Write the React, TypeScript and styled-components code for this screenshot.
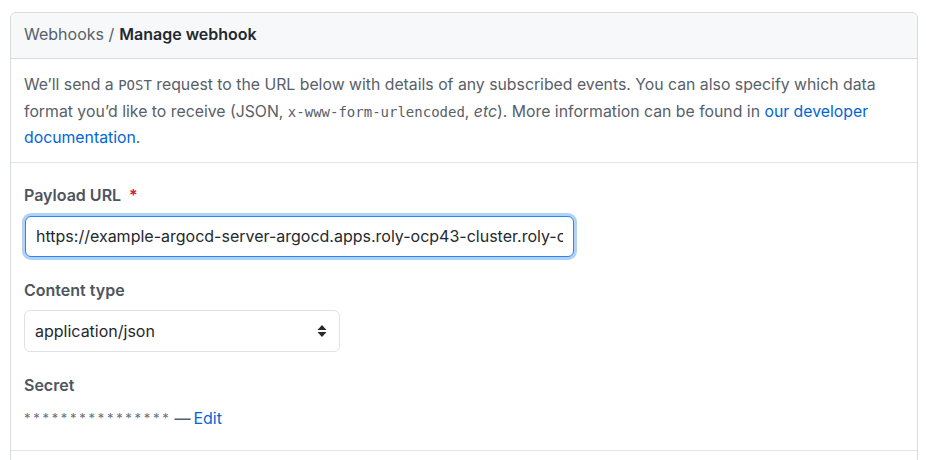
import React from "react";
import styled, { createGlobalStyle } from "styled-components";

const GlobalStyle = createGlobalStyle`
  html, body { margin: 0; padding: 0; background: #ffffff; }
  body {
    font-family: Inter, "Noto Sans", "Liberation Sans", sans-serif;
    color: #24292e;
    -webkit-font-smoothing: antialiased;
  }
  * { box-sizing: border-box; }
`;

const Page = styled.div`
  padding: 12px 8px 0 10px;
  height: 460px;
  overflow: hidden;
`;

const Box = styled.div`
  border: 1px solid #d7dadf;
  border-radius: 6px;
  min-height: 520px;
  background: #fff;
`;

const BoxHeader = styled.div`
  display: flex;
  align-items: center;
  height: 46px;
  padding: 0 13px 3px;
  background: #f6f8fa;
  border-bottom: 1px solid #d7dadf;
  border-radius: 6px 6px 0 0;
  font-size: 16px;
  color: #586069;
`;

const Crumb = styled.span`
  color: #586069;
`;

const CrumbCurrent = styled.strong`
  color: #24292e;
  font-weight: 600;
  margin-left: 5px;
`;

const Description = styled.p`
  margin: 0;
  padding: 13px 13px 11px;
  font-size: 15.8px;
  line-height: 25.5px;
  color: #586069;
  border-bottom: 1px solid #e1e4e8;
`;

const Code = styled.code`
  font-family: "DejaVu Sans Mono", "Liberation Mono", monospace;
  font-size: 14px;
  color: #586069;
`;

const Link = styled.a`
  color: #0366d6;
  text-decoration: none;
`;

const FormSection = styled.div`
  padding: 20px 13px 20px;
  border-bottom: 1px solid #e1e4e8;
`;

const FormGroup = styled.div`
  & + & {
    margin-top: 21px;
  }
`;

const Label = styled.label<{ $gap?: number }>`
  display: block;
  font-size: 16px;
  line-height: 24px;
  font-weight: 600;
  color: #4d555e;
  margin-bottom: ${(p) => p.$gap ?? 9}px;
`;

const Required = styled.span`
  color: #cb2431;
  margin-left: 8px;
`;

const TextInput = styled.input`
  display: block;
  width: 549px;
  height: 41px;
  margin-left: 1px;
  padding: 0 10px;
  border: 1px solid #2188ff;
  border-radius: 6px;
  box-shadow: 0 0 0 3px rgba(3, 102, 214, 0.3);
  outline: none;
  font-family: Inter, "Noto Sans", "Liberation Sans", sans-serif;
  font-size: 16px;
  color: #24292e;
  background: #fff;
`;

const SelectBox = styled.div`
  display: flex;
  align-items: center;
  justify-content: space-between;
  width: 316px;
  height: 42px;
  padding: 0 12px 0 10px;
  border: 1px solid #dfe2e5;
  border-radius: 6px;
  background: #fff;
  font-size: 16px;
  color: #24292e;
`;

const SecretLine = styled.div`
  font-size: 16px;
  line-height: 24px;
  color: #586069;
  display: flex;
  align-items: center;
`;

const Stars = styled.span`
  font-size: 13px;
  letter-spacing: 2.7px;
  color: #6a737d;
  margin-right: 3px;
`;

const Dash = styled.span`
  color: #586069;
  margin-right: 3px;
  font-weight: 500;
`;

const SelectArrows = () => (
  <svg width="10" height="14" viewBox="0 0 10 14" aria-hidden="true">
    <path d="M5 1 L9.5 6 H0.5 Z" fill="#24292e" />
    <path d="M5 13 L9.5 8 H0.5 Z" fill="#24292e" />
  </svg>
);

export default function App() {
  return (
    <>
      <GlobalStyle />
      <Page>
        <Box>
          <BoxHeader>
            <Crumb>Webhooks /</Crumb>
            <CrumbCurrent>Manage webhook</CrumbCurrent>
          </BoxHeader>
          <Description>
            We’ll send a <Code>POST</Code> request to the URL below with details of any
            subscribed events. You can also specify which data format you’d like to receive
            (JSON, <Code>x-www-form-urlencoded</Code>, <em>etc</em>). More information can be
            found in <Link href="#">our developer documentation</Link>.
          </Description>
          <FormSection>
            <FormGroup>
              <Label>
                Payload URL<Required>*</Required>
              </Label>
              <TextInput
                readOnly
                value="https://example-argocd-server-argocd.apps.roly-ocp43-cluster.roly-ocp43.example.com/api/webhook"
              />
            </FormGroup>
            <FormGroup>
              <Label $gap={8}>Content type</Label>
              <SelectBox>
                <span>application/json</span>
                <SelectArrows />
              </SelectBox>
            </FormGroup>
            <FormGroup>
              <Label>Secret</Label>
              <SecretLine>
                <Stars>****************</Stars>
                <Dash>—</Dash>
                <Link href="#">Edit</Link>
              </SecretLine>
            </FormGroup>
          </FormSection>
        </Box>
      </Page>
    </>
  );
}
